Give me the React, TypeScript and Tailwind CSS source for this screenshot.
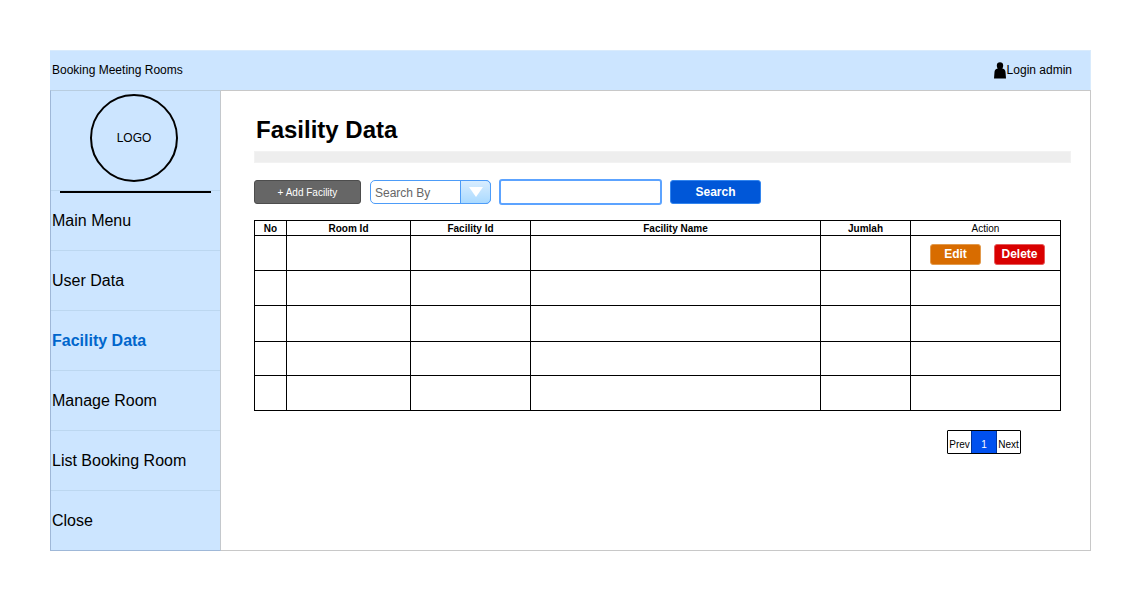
const menu = [
  { label: "Main Menu", active: false },
  { label: "User Data", active: false },
  { label: "Facility Data", active: true },
  { label: "Manage Room", active: false },
  { label: "List Booking Room", active: false },
  { label: "Close", active: false },
];

const columns = [
  { label: "No", width: "w-8", weight: "font-bold" },
  { label: "Room Id", width: "w-[124px]", weight: "font-bold" },
  { label: "Facility Id", width: "w-[120px]", weight: "font-bold" },
  { label: "Facility Name", width: "w-auto", weight: "font-bold" },
  { label: "Jumlah", width: "w-[90px]", weight: "font-bold" },
  { label: "Action", width: "w-[150px]", weight: "font-normal" },
];

const rows = [
  { id: 1, height: "h-[35px]", actions: true },
  { id: 2, height: "h-[35px]", actions: false },
  { id: 3, height: "h-9", actions: false },
  { id: 4, height: "h-[34px]", actions: false },
  { id: 5, height: "h-[35px]", actions: false },
];

function UserIcon() {
  return (
    <svg className="h-[17px] w-3" viewBox="0 0 12 17" fill="#000" aria-hidden="true">
      <path d="M2.800 3.500C2.800 1.500 4.100.300 6 .300s3.200 1.200 3.200 3.200c0 1.200-.3 2.200-.9 3C10.600 6.900 11.300 8 11.500 10L12 16.500H0L.5 10C.7 8 1.400 6.900 3.700 6.500 3.100 5.700 2.800 4.700 2.800 3.500z" />
    </svg>
  );
}

function Header() {
  return (
    <header className="flex h-10 items-center justify-between border-t border-r border-[#d9ebfc] bg-[#cce5ff] pr-[18px] pb-px pl-0.5 text-xs">
      <span>Booking Meeting Rooms</span>
      <a href="#login" className="flex items-center gap-px">
        <UserIcon />
        Login admin
      </a>
    </header>
  );
}

function Sidebar() {
  return (
    <aside className="flex w-[171px] shrink-0 flex-col border border-t-[#b8cde0] border-r-[#c4c8cc] border-b-[#9fb8d8] border-l-[#9fb8d8] bg-[#cce5ff]">
      <div className="flex h-[99px] justify-center pt-[3px] pr-[3px]">
        <div className="flex size-[88px] items-center justify-center rounded-full border-2 border-black text-xs">
          LOGO
        </div>
      </div>
      <nav className="flex flex-col border-t border-[#bcd7f0]">
        <div className="mx-[9px] h-0.5 bg-black" />
        {menu.map((item, i) => (
          <a
            key={item.label}
            href={"#" + item.label.toLowerCase().replace(/ /g, "-")}
            className={
              "flex items-center pl-px text-base " +
              (i === 0 ? "h-[57px] pb-0.5 " : "h-[60px] border-t border-[#bcd7f0] ") +
              (item.active ? "font-bold text-[#0066cc]" : "text-black")
            }
          >
            {item.label}
          </a>
        ))}
      </nav>
    </aside>
  );
}

function Toolbar() {
  return (
    <div className="mt-4 flex h-[26px] items-center">
      <button className="h-6 w-[107px] rounded-[3px] border border-[#4d4d4d] bg-[#666666] pt-px text-[10px] text-white">
        + Add Facility
      </button>
      <div className="relative ml-[9px] flex h-6 w-[121px]">
        <select
          aria-label="Search By"
          className="h-6 w-full appearance-none rounded-[5px] border border-[#4d9cf8] bg-white pt-px pl-1 text-xs text-[#666666]"
        >
          <option>Search By</option>
          <option>Room Id</option>
          <option>Facility Id</option>
          <option>Facility Name</option>
        </select>
        <div className="pointer-events-none absolute inset-y-0 right-0 flex w-[31px] items-center justify-center rounded-r-[5px] border border-[#4d9cf8] bg-linear-to-b from-[#d8edff] to-[#aadaff]">
          <svg className="h-[10px] w-[14px]" viewBox="0 0 14 10" fill="#fff" aria-hidden="true">
            <path d="M0 0h14L7 10z" />
          </svg>
        </div>
      </div>
      <input
        type="text"
        aria-label="Search text"
        className="ml-2 h-[26px] w-[163px] rounded-[3px] border-2 border-[#5ca3ff] bg-white px-1 text-xs outline-none"
      />
      <button className="ml-2 h-6 w-[91px] rounded-[3px] border border-[#3385ee] bg-[#0057d8] text-xs font-bold text-white">
        Search
      </button>
    </div>
  );
}

function FacilityTable() {
  return (
    <table className="mt-[15px] w-full table-fixed border-collapse">
      <thead>
        <tr className="h-[15px]">
          {columns.map((c) => (
            <th
              key={c.label}
              className={"border border-black px-0 pt-0.5 pb-0 text-center text-[10px] leading-3 " + c.width + " " + c.weight}
            >
              {c.label}
            </th>
          ))}
        </tr>
      </thead>
      <tbody>
        {rows.map((row) => (
          <tr key={row.id} className={row.height}>
            {columns.map((c) => (
              <td key={c.label} className="border border-black p-0 align-middle">
                {row.actions && c.label === "Action" && (
                  <div className="flex justify-end gap-[13px] pt-0.5 pr-[15px] text-xs font-bold text-white">
                    <button className="h-[21px] w-[51px] rounded-[3px] border border-[#e29a4d] bg-[#d86c00]">Edit</button>
                    <button className="h-[21px] w-[51px] rounded-[3px] border border-[#e65a5a] bg-[#d90000]">Delete</button>
                  </div>
                )}
              </td>
            ))}
          </tr>
        ))}
      </tbody>
    </table>
  );
}

function Pagination() {
  return (
    <nav aria-label="Pagination" className="mt-[19px] mr-10 flex justify-end text-[10px]">
      <div className="flex h-6 rounded-[1px] border border-black">
        <button className="w-[23px] pt-1">Prev</button>
        <button className="w-[26px] border-x border-[#003399] bg-[#0050ef] pt-1 text-white">1</button>
        <button className="w-[23px] pt-1">Next</button>
      </div>
    </nav>
  );
}

export default function App() {
  return (
    <div className="min-h-screen bg-white p-[50px] font-['Liberation_Sans',Arial,sans-serif] text-black">
      <Header />
      <div className="flex">
        <Sidebar />
        <main className="min-w-0 flex-1 border-t border-r border-b border-[#c8c8c8] pl-[33px]">
          <h1 className="mt-6 pl-0.5 text-2xl leading-[30px] font-bold">Fasility Data</h1>
          <div className="mt-1.5 mr-[19px] h-3 border border-[#f2f2f2] bg-[#eeeeee]" />
          <div className="mr-[29px]">
            <Toolbar />
            <FacilityTable />
            <Pagination />
          </div>
        </main>
      </div>
    </div>
  );
}
